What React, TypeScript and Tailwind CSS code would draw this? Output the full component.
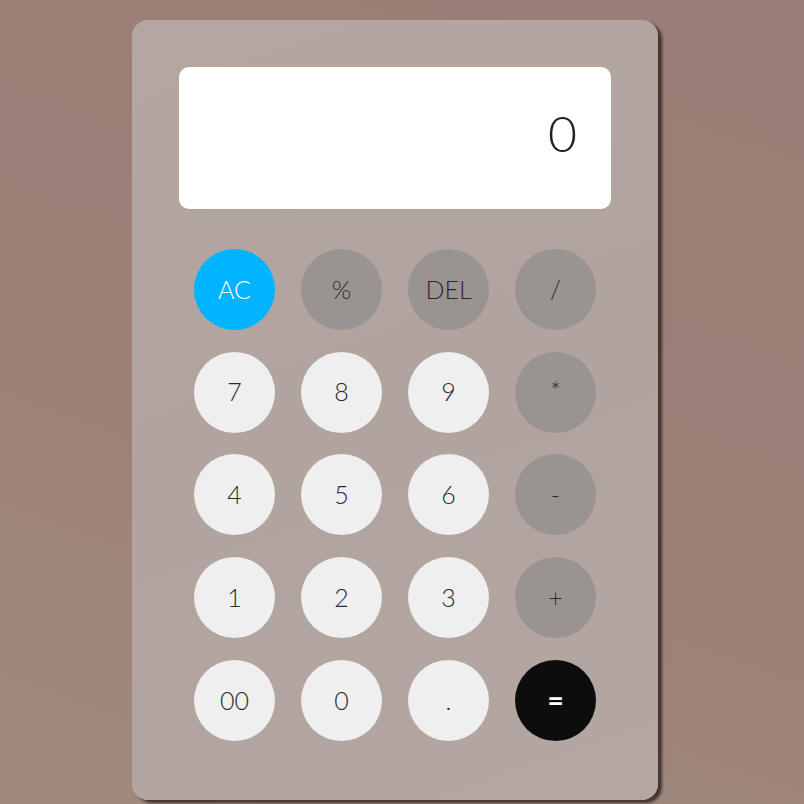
const keys: { label: string; kind: "ac" | "op" | "num" | "eq" }[] = [
  { label: "AC", kind: "ac" },
  { label: "%", kind: "op" },
  { label: "DEL", kind: "op" },
  { label: "/", kind: "op" },
  { label: "7", kind: "num" },
  { label: "8", kind: "num" },
  { label: "9", kind: "num" },
  { label: "*", kind: "op" },
  { label: "4", kind: "num" },
  { label: "5", kind: "num" },
  { label: "6", kind: "num" },
  { label: "-", kind: "op" },
  { label: "1", kind: "num" },
  { label: "2", kind: "num" },
  { label: "3", kind: "num" },
  { label: "+", kind: "op" },
  { label: "00", kind: "num" },
  { label: "0", kind: "num" },
  { label: ".", kind: "num" },
  { label: "=", kind: "eq" },
];

const styles = {
  ac: "bg-[#00b4ff] text-white",
  op: "bg-[#999491] text-[#2a2a2a]",
  num: "bg-[#efefef] text-[#2a2a2a]",
  eq: "bg-[#0d0d0d] text-white font-bold text-[28px]",
};

export default function App() {
  return (
    <div className="w-full h-[804px] flex justify-center pt-5 pr-[14px] bg-[linear-gradient(200deg,#997d76_0%,#9b8279_60%,#a08a7f_100%)] font-['Lato','Open_Sans',sans-serif] font-light">
      <div className="w-[526px] h-[780px] rounded-2xl bg-[linear-gradient(160deg,#b4a6a1_0%,#b1a39e_50%,#b4a7a2_100%)] shadow-[4px_3px_3px_rgba(40,25,20,0.75)] px-[47px] pt-[47px]">
        <div className="h-[142px] rounded-[10px] bg-white flex items-center justify-end pr-[34px] text-[50px] text-[#222] pb-[10px]">
          0
        </div>
        <div className="grid grid-cols-[repeat(4,81px)] gap-x-[26px] gap-y-[21.7px] justify-center mt-10">
          {keys.map((k) => (
            <button
              key={k.label}
              className={`w-[81px] h-[81px] rounded-full flex items-center justify-center text-[25px] ${styles[k.kind]}`}
            >
              {k.label}
            </button>
          ))}
        </div>
      </div>
    </div>
  );
}
